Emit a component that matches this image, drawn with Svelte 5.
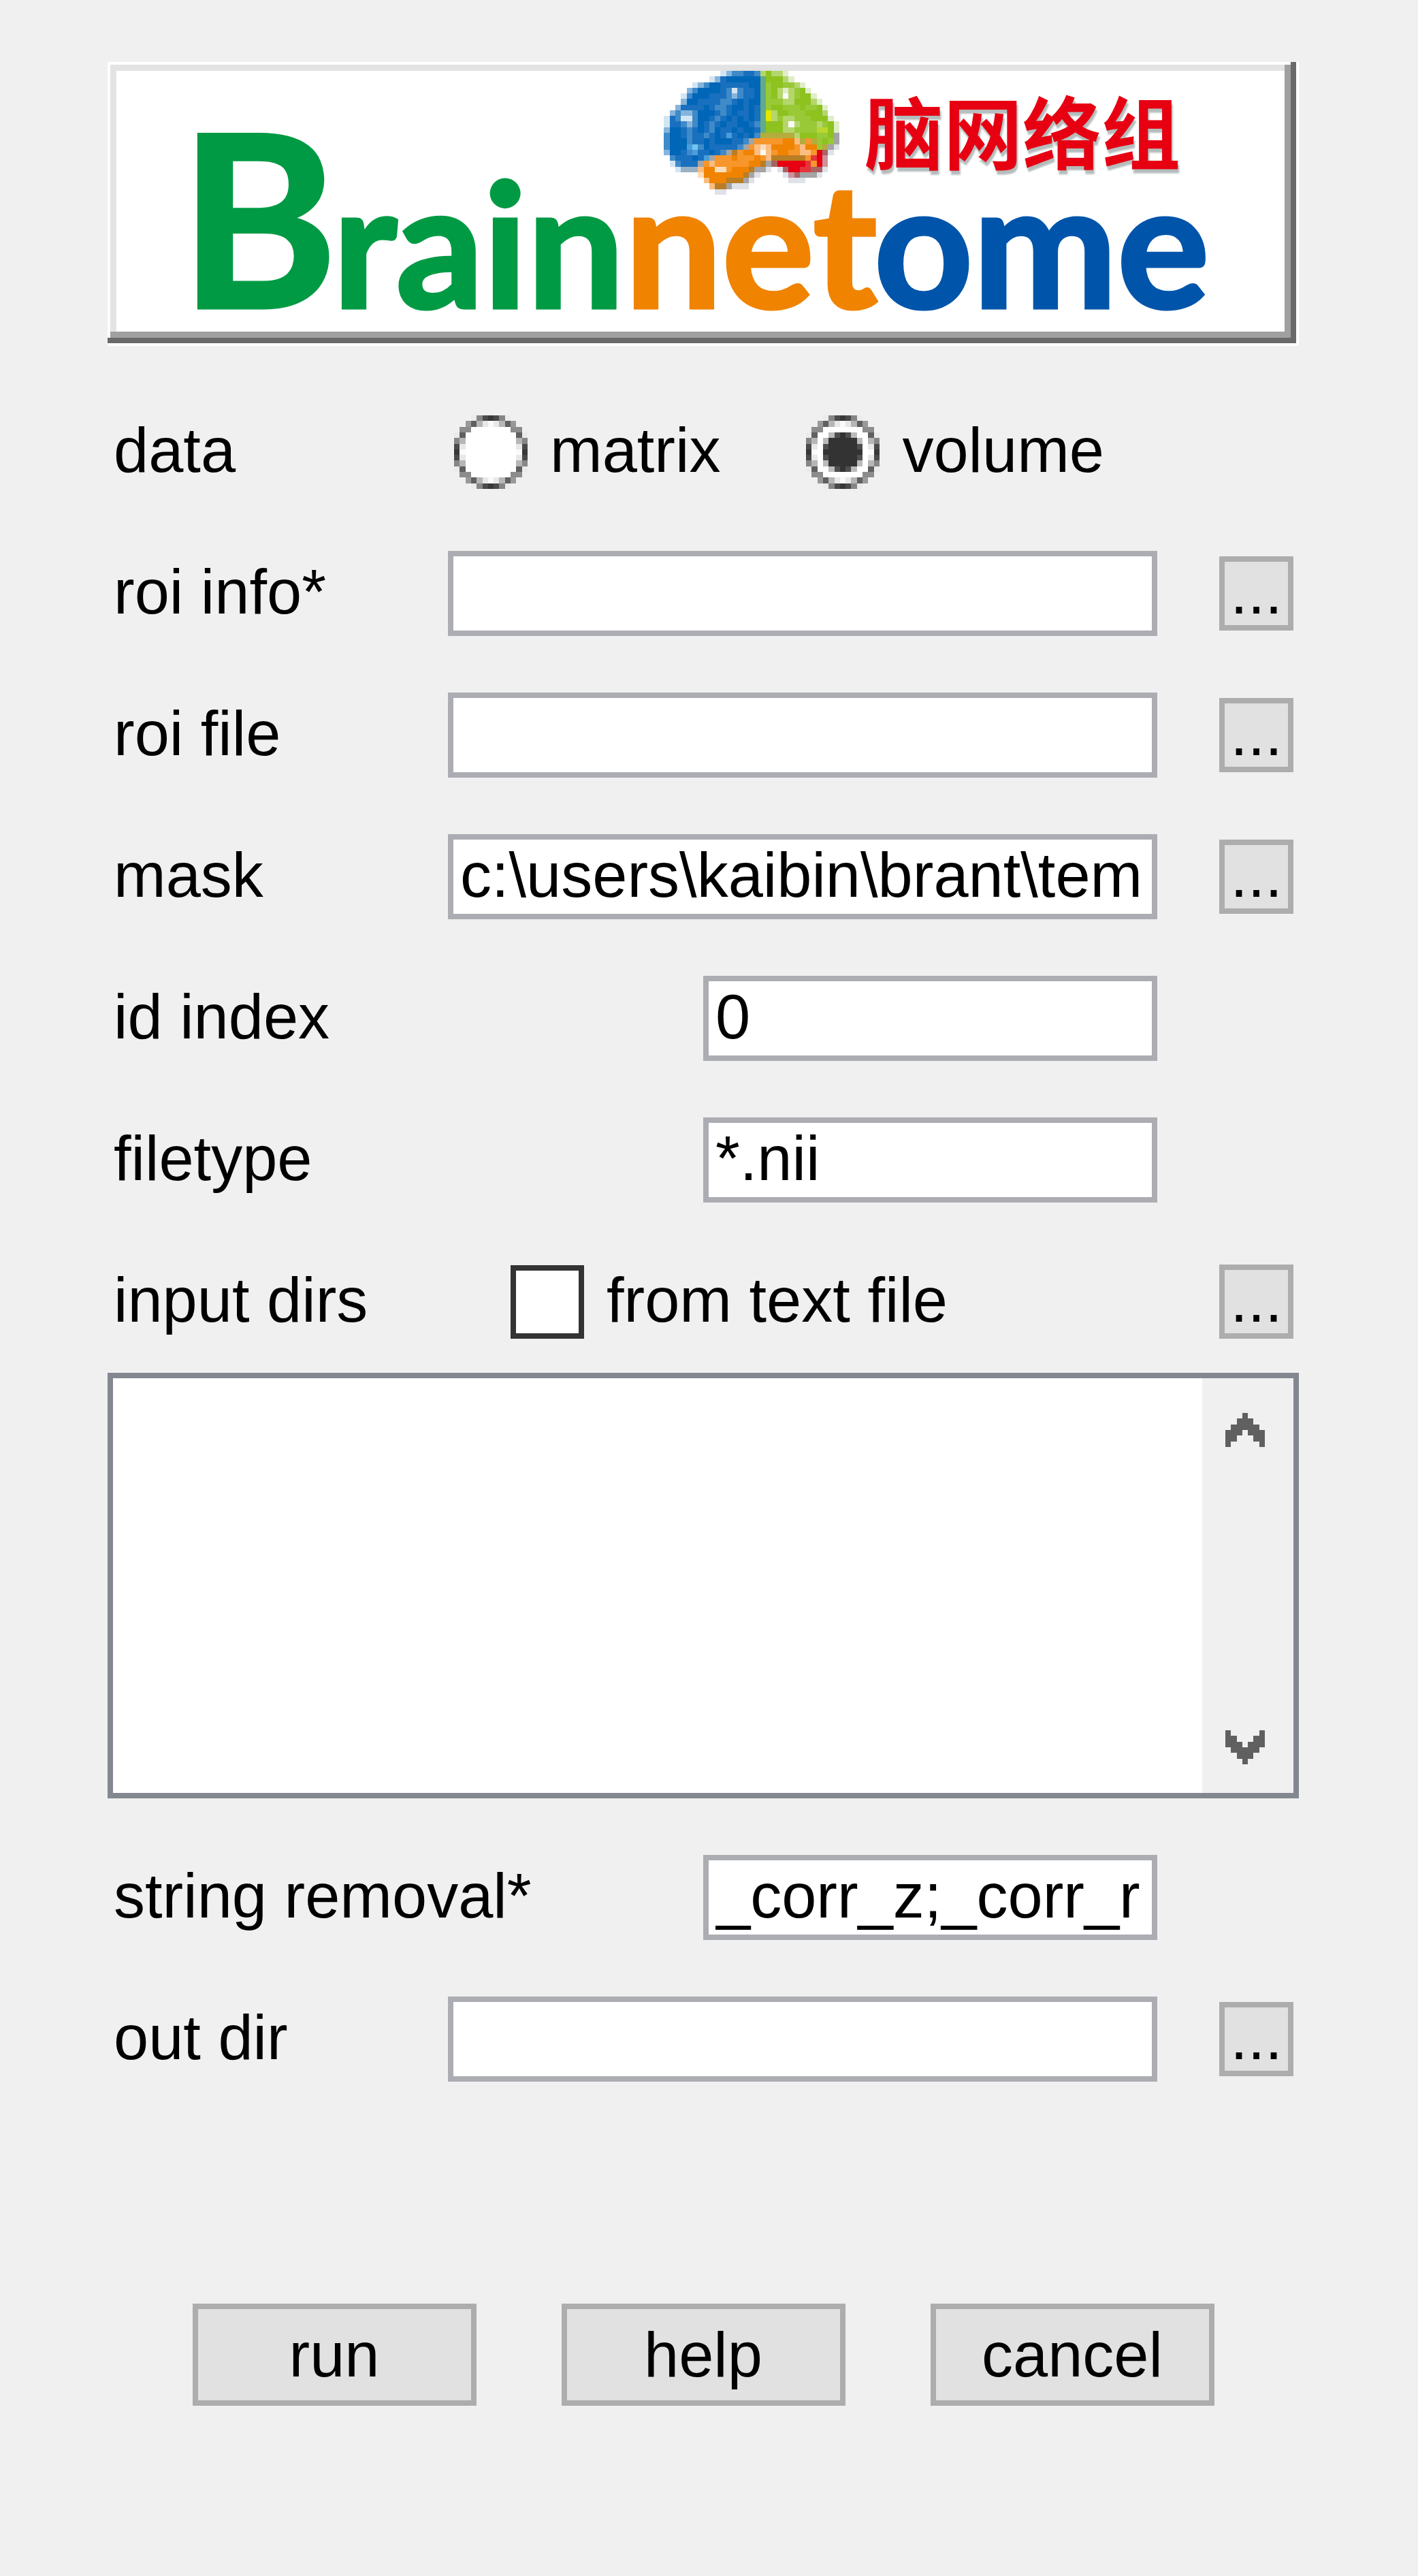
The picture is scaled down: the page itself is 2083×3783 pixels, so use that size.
<script>
  let dataKind = $state('volume');
  let fromTextFile = $state(false);
  let inputDirs = $state('');
  let list;

  let fields = $state([
    { id: 'roi-info', label: 'roi info*', value: '', browse: true },
    { id: 'roi-file', label: 'roi file', value: '', browse: true },
    { id: 'mask', label: 'mask', value: 'c:\\users\\kaibin\\brant\\tem', browse: true },
    { id: 'id-index', label: 'id index', value: '0', browse: false },
    { id: 'filetype', label: 'filetype', value: '*.nii', browse: false }
  ]);
  let outputs = $state([
    { id: 'string-removal', label: 'string removal*', value: '_corr_z;_corr_r', browse: false },
    { id: 'out-dir', label: 'out dir', value: '', browse: true }
  ]);

  const colours = {
    B: '#0066b8', b: '#1870be', c: '#3f8ac9', d: '#86b5dc', e: '#d3e5f4', f: '#9ab0c4',
    q: '#4a9edd', t: '#70c8f0', w: '#fafaf5', T: '#62aa8c', G: '#8dc21f', g: '#99c936',
    h: '#b4d66c', i: '#e0eec8', u: '#b9d72e', a: '#b4ac3c', y: '#e4e600', O: '#f08300',
    o: '#f7962a', p: '#fbbd80', P: '#fddcba', R: '#e60012', r: '#e4343c', s: '#a86464',
    z: '#cc929c', k: '#a4a4a4', l: '#dfe2e8', n: '#b97d24'
  };

  // Each row: first column, then one palette letter per pixel.
  const brainRows = [
    [11, 'edccbbchGhhi'],
    [9, 'edbBBBBBBTGGGhi'],
    [6, 'edcBBbbbbbBBTgGGgghi'],
    [5, 'dcBBBBbcecbbBTgGhihgGi'],
    [4, 'ecBBBbbbcdcbbBTgGhwhgGGi'],
    [4, 'dBBbbbbccbBbBBTggghhGGGhi'],
    [3, 'dbbbbBbccbBBbBbTgGGgggGggGi'],
    [2, 'dcddcBBBbcbBbbBbTyhGGgggGGGh'],
    [1, 'ebceecBBbcbBbBbBbTyhghhgggGGGi'],
    [1, 'ebbcdcBbcbBbbBBbcTGGGhwhggghgGi'],
    [1, 'dBBbcbBbcBbbBbBBbTGGGhhgggguuGi'],
    [1, 'cBBbcbbcbBbqbBbBcaaaaaahGGGggGk'],
    [1, 'cBBBcbbBbBBBbbckoooooOOpaoagGgk'],
    [1, 'cBBBqtcBbbbbbckopPpOOOOopOOgakl'],
    [1, 'dBBbcqbbBbcknoOOpwpoOOooppoRsl'],
    [2, 'cbbbBbqkoooOoooOopnnnnnnorRz'],
    [2, 'ecbbbkopooooooOOnksRRRRRroRz'],
    [3, 'efffpOOPPoOOOnkkl.lsRRrrssl'],
    [7, 'POOOOOOOnkl....lzskkkl'],
    [8, 'pOOOnnnkl......lll'],
    [9, 'pnnklll'],
    [10, 'll']
  ];

  const brain = brainRows.flatMap(([start, line], y) =>
    [...line].map((key, n) => ({ x: start + n, y, fill: colours[key] })).filter((p) => p.fill)
  );

  const greys = {
    a: '#ebebeb', b: '#868686', c: '#4a4a4a', d: '#383838', e: '#999999', f: '#606060',
    g: '#b6b6b6', h: '#e8e8e8', i: '#fafafa', j: '#8c8c8c', w: '#ffffff', k: '#bbbbbb',
    m: '#4f4f4f', x: '#333333'
  };
  const ringTop = [
    '...abcdcba...', '..efghihgfe..', '.jjwwwwwwwjj.', 'afwwwwwwwwwfa',
    'bgwwwwwwwwwgb', 'chwwwwwwwwwhc', 'diwwwwwwwwwid'
  ];
  const dotTop = [
    '.............', '.............', '.............', '....kmxmk....',
    '...kxxxxxk...', '...mxxxxxm...', '...xxxxxxx...'
  ];
  const pixels = (top) =>
    [...top, ...top.slice(0, 6).reverse()].flatMap((line, y) =>
      [...line].map((key, x) => ({ x, y, fill: greys[key] })).filter((p) => p.fill)
    );
  const ring = pixels(ringTop);
  const dot = pixels(dotTop);

  const scroll = (step) => list.scrollBy({ top: step });
</script>

{#snippet field(f)}
  <div class="row">
    <label class="name" for={f.id}>{f.label}</label>
    <input
      class="text"
      class:short={f.id === 'id-index' || f.id === 'filetype' || f.id === 'string-removal'}
      id={f.id}
      type="text"
      spellcheck="false"
      bind:value={f.value}
    />
    {#if f.browse}
      <button class="browse" type="button" aria-label={`browse ${f.label}`}>...</button>
    {/if}
  </div>
{/snippet}

{#snippet radio(kind)}
  <label class="choice">
    <span class="radio">
      <input type="radio" name="data" value={kind} bind:group={dataKind} />
      <svg viewBox="0 0 13 13" shape-rendering="crispEdges" aria-hidden="true">
        {#each dataKind === kind ? [...ring, ...dot] : ring as p}
          <rect x={p.x} y={p.y} width="1" height="1" fill={p.fill} />
        {/each}
      </svg>
    </span>
    <span class="caption">{kind}</span>
  </label>
{/snippet}

<main>
  <header class="banner">
    <svg class="logo" viewBox="0 0 1716 383">
      <text class="latin" y="348"><tspan class="big green" x="93">B</tspan><tspan class="green" x="318">rain</tspan><tspan class="orange" x="747">net</tspan><tspan class="blue" x="1113">ome</tspan></text>
      <text class="han" x="1099" y="136">脑网络组</text>
      <svg x="796" y="0" width="266" height="182" viewBox="0 0 32 22" preserveAspectRatio="none" shape-rendering="crispEdges">
        {#each brain as p}
          <rect x={p.x} y={p.y} width="1" height="1" fill={p.fill} />
        {/each}
      </svg>
    </svg>
  </header>

  <form onsubmit={(e) => e.preventDefault()}>
    <div class="row" role="radiogroup" aria-labelledby="data-name">
      <span class="name" id="data-name">data</span>
      <div class="radios">
        {@render radio('matrix')}
        {@render radio('volume')}
      </div>
    </div>

    {#each fields as f (f.id)}
      {@render field(f)}
    {/each}

    <section class="dirs">
      <div class="row">
        <label class="name" for="input-dirs">input dirs</label>
        <label class="choice from-file">
          <input class="check" type="checkbox" bind:checked={fromTextFile} />
          <span class="caption">from text file</span>
        </label>
        <button class="browse" type="button" aria-label="browse input dirs">...</button>
      </div>
      <div class="list">
        <textarea id="input-dirs" rows="5" spellcheck="false" bind:this={list} bind:value={inputDirs}></textarea>
        <div class="scrollbar">
          <button class="up" type="button" aria-label="scroll up" onclick={() => scroll(-100)}>
            <svg viewBox="0 0 7 6" preserveAspectRatio="none" shape-rendering="crispEdges">
              <path d="M3 0h1v1h1v1h1v1h1v3h-1v-1h-1v-1h-1v-1h-1v1h-1v1h-1v1h-1v-3h1v-1h1v-1h1z" />
            </svg>
          </button>
          <button class="down" type="button" aria-label="scroll down" onclick={() => scroll(100)}>
            <svg viewBox="0 0 7 6" preserveAspectRatio="none" shape-rendering="crispEdges">
              <path d="M3 6h1v-1h1v-1h1v-1h1v-3h-1v1h-1v1h-1v1h-1v-1h-1v-1h-1v-1h-1v3h1v1h1v1h1z" />
            </svg>
          </button>
        </div>
      </div>
    </section>

    {#each outputs as f (f.id)}
      {@render field(f)}
    {/each}

    <div class="actions">
      <button type="submit">run</button>
      <button type="button">help</button>
      <button type="button">cancel</button>
    </div>
  </form>
</main>

<style>
  :global(body) {
    background: #f0f0f0;
  }

  main {
    box-sizing: border-box;
    padding: 91px 175px 250px 158px;
    color: #000;
    font-family: 'Liberation Sans', Arial, sans-serif;
    font-size: 92px;
    line-height: 104px;
  }

  input,
  button,
  textarea {
    box-sizing: border-box;
    margin: 0;
    border-radius: 0;
    color: inherit;
    font: inherit;
    outline-offset: 4px;
  }

  .banner {
    padding: 13px 21px 21px 13px;
    background: #fff;
    box-shadow:
      inset -4px -4px #fff,
      inset -12px -12px #696969,
      inset 4px 4px #fff,
      inset -21px -21px #a0a0a0,
      inset 13px 13px #e3e3e3;
  }

  .logo {
    display: block;
    width: 100%;
    overflow: visible;
  }

  .latin {
    font: 700 253px Lato, sans-serif;
    stroke-width: 5px;
  }

  .big {
    font-size: 352px;
  }

  .green {
    fill: #009a44;
    stroke: #009a44;
  }

  .orange {
    fill: #f08300;
    stroke: #f08300;
  }

  .blue {
    fill: #0055aa;
    stroke: #0055aa;
  }

  .han {
    fill: #e60012;
    font: 700 116px 'Noto Sans CJK SC', sans-serif;
    filter: drop-shadow(2px 6px 1px #b4bcbc);
  }

  form {
    display: flex;
    flex-direction: column;
    gap: 83px;
    padding-top: 93px;
  }

  .row {
    display: grid;
    grid-template-columns: 500px 1fr 109px;
    align-items: center;
    height: 125px;
    padding-right: 8px;
  }

  .name {
    padding: 0 0 5px 9px;
    white-space: nowrap;
  }

  .caption {
    padding-bottom: 5px;
    white-space: nowrap;
  }

  .text {
    width: auto;
    min-width: 0;
    height: 125px;
    margin-right: 91px;
    padding: 0 8px 5px 10px;
    border: 8px solid #abadb3;
    background: #fff;
    justify-self: stretch;
  }

  .text.short {
    margin-left: 375px;
  }

  .browse {
    height: 109px;
    padding: 0 0 5px;
    border: 8px solid #adadad;
    background: #e1e1e1;
    line-height: 88px;
  }

  .radios {
    display: flex;
    gap: 126px;
    padding-left: 9px;
  }

  .choice {
    display: flex;
    align-items: center;
    gap: 33px;
  }

  .from-file {
    padding-left: 92px;
  }

  .radio {
    display: grid;
    flex: none;
    width: 108px;
    height: 108px;
  }

  .radio input,
  .radio svg {
    grid-area: 1 / 1;
    width: 100%;
    height: 100%;
  }

  .radio input {
    appearance: none;
    border-radius: 50%;
  }

  .radio svg {
    pointer-events: none;
  }

  .check {
    flex: none;
    width: 108px;
    height: 108px;
    border: 8px solid #333;
    background: #fff;
    appearance: none;
  }

  .check:checked {
    background: #333;
    box-shadow: inset 0 0 0 16px #fff;
  }

  .dirs {
    display: flex;
    flex-direction: column;
    gap: 42px;
  }

  .list {
    display: flex;
    height: 625px;
    box-sizing: border-box;
    border: 8px solid #828790;
    background: #fff;
  }

  .list textarea {
    flex: 1;
    min-width: 0;
    padding: 8px;
    border: 0;
    background: #fff;
    resize: none;
    scrollbar-width: none;
  }

  .scrollbar {
    display: flex;
    flex-direction: column;
    justify-content: space-between;
    width: 134px;
    background: #f0f0f0;
  }

  .scrollbar button {
    display: flex;
    align-items: center;
    justify-content: center;
    padding: 0 8px 0 0;
    border: 0;
    background: none;
  }

  .up {
    height: 152px;
  }

  .down {
    height: 134px;
  }

  .scrollbar svg {
    width: 58px;
    height: 50px;
    fill: #606060;
  }

  .actions {
    display: flex;
    justify-content: center;
    gap: 125px;
    padding-top: 243px;
  }

  .actions button {
    width: 417px;
    height: 150px;
    padding: 0;
    border: 8px solid #adadad;
    background: #e1e1e1;
  }
</style>
